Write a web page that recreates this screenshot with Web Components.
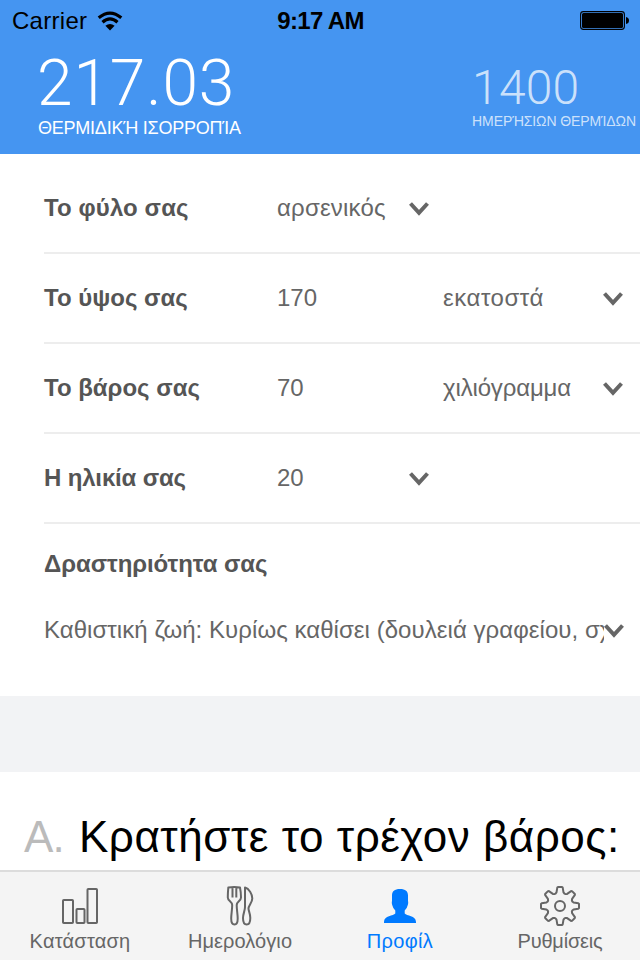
<!DOCTYPE html>
<html lang="el">
<head>
<meta charset="utf-8">
<title>Προφίλ</title>
<style>
html, body { margin: 0; height: 960px; overflow: hidden; background: #fff; }
body { font-family: "Liberation Sans", Arial, sans-serif; }
</style>
</head>
<body>
<profile-screen></profile-screen>
<script>
function define(name, html) {
  const template = document.createElement('template');
  template.innerHTML = html;
  customElements.define(name, class extends HTMLElement {
    constructor() {
      super();
      this.attachShadow({ mode: 'open' }).append(template.content.cloneNode(true));
    }
  });
}

define('status-bar', `
<style>
:host { display: grid; grid-template-columns: 1fr auto 1fr; align-items: center; height: 41px; padding: 0 11px 0 12px; box-sizing: border-box; font-size: 24px; line-height: 28px; color: #000; }
.left { display: flex; align-items: center; gap: 10px; letter-spacing: .28px; }
.time { font-weight: 700; letter-spacing: -.67px; }
.battery { justify-self: end; }
svg { display: block; }
</style>
<div class="left"><span>Carrier</span>
<svg width="26" height="20" viewBox="0 0 26 20"><g fill="none" stroke="#000" stroke-width="3.2"><path d="M1.7 6.8Q13-2.6 24.3 6.8"/><path d="M5.5 11.2Q13 4.600 20.5 11.2"/></g><path d="M8.4 14.8Q13 11.2 17.6 14.8L13 19.4Z"/></svg></div>
<span class="time">9:17 AM</span>
<svg class="battery" width="49" height="19" viewBox="0 0 49 19"><rect x=".6" y=".6" width="43.8" height="17.8" rx="2.8" fill="none" stroke="#000" stroke-width="1.1"/><rect x="2" y="2" width="41" height="15" rx="1.5"/><path d="M46 6q3 .5 3 3.500t-3 3.500z"/></svg>`);

define('calorie-header', `
<style>
:host { display: block; height: 154px; background: #4595f1; color: #fff; overflow: hidden; }
.stats { display: flex; justify-content: space-between; padding: 19px 4px 0 37px; }
.main, .goal { display: flex; flex-direction: column; white-space: nowrap; }
.value { font-family: Roboto, sans-serif; font-weight: 300; font-size: 64px; line-height: 48px; letter-spacing: .9px; margin-bottom: 10px; }
.caption { font-size: 18px; line-height: 20px; letter-spacing: -.23px; padding-left: 1px; }
.goal { padding-top: 4px; color: rgba(255,255,255,.74); }
.goal .value { font-size: 48px; letter-spacing: .2px; margin-bottom: 1px; }
.goal .caption { font-size: 14px; line-height: 16px; letter-spacing: -.1px; padding: 0; }
</style>
<status-bar></status-bar>
<div class="stats">
<div class="main"><span class="value">217.03</span><span class="caption">ΘΕΡΜΙΔΙΚΉ ΙΣΟΡΡΟΠΊΑ</span></div>
<div class="goal"><span class="value">1400</span><span class="caption">ΗΜΕΡΉΣΙΩΝ ΘΕΡΜΊΔΩΝ</span></div>
</div>`);

define('chevron-down', `
<style>:host { display: block; width: 20px; height: 14px; } svg { display: block; }</style>
<svg width="20" height="14" viewBox="0 0 20 14"><path d="M1.5 1.5L10 10.8L18.5 1.5" fill="none" stroke="#666" stroke-width="4"/></svg>`);

define('unit-row', `
<style>
:host { display: grid; grid-template-columns: 233px 166px 160px 1fr; align-items: center; height: 90px; box-sizing: border-box; margin-left: 44px; border-bottom: 2px solid #ededed; font-size: 24px; line-height: 28px; color: #666; white-space: nowrap; }
.label { font-weight: 700; color: #555; }
chevron-down { margin-top: 2px; }
</style>
<span class="label"><slot name="label"></slot></span>
<span><slot></slot></span>
<span><slot name="unit"></slot></span>
<chevron-down></chevron-down>`);

define('select-row', `
<style>
:host { display: grid; grid-template-columns: 233px 132px 1fr; align-items: center; height: 90px; box-sizing: border-box; margin-left: 44px; border-bottom: 2px solid #ededed; font-size: 24px; line-height: 28px; color: #666; white-space: nowrap; }
.label { font-weight: 700; color: #555; }
chevron-down { margin-top: 2px; }
</style>
<span class="label"><slot name="label"></slot></span>
<span><slot></slot></span>
<chevron-down></chevron-down>`);

define('activity-field', `
<style>
:host { display: block; height: 172px; box-sizing: border-box; padding: 26px 0 0 44px; font-size: 24px; line-height: 28px; color: #666; }
.title { font-weight: 700; color: #555; letter-spacing: -.07px; }
.choice { display: flex; align-items: center; margin-top: 38px; }
.text { width: 560px; flex: none; overflow: hidden; white-space: nowrap; letter-spacing: .05px; }
chevron-down { margin-top: 2px; }
</style>
<div class="title"><slot name="label"></slot></div>
<div class="choice"><span class="text"><slot></slot></span><chevron-down></chevron-down></div>`);

define('plan-heading', `
<style>
:host { display: flex; height: 98px; box-sizing: border-box; padding: 40px 0 0 24px; font-size: 44px; line-height: 50px; white-space: nowrap; color: #000; overflow: hidden; }
.mark { width: 55px; color: #bbb; letter-spacing: -.8px; }
.text { letter-spacing: .52px; }
</style>
<span class="mark"><slot name="mark"></slot></span><span class="text"><slot></slot></span>`);

define('tab-item', `
<style>
:host { display: flex; flex-direction: column; align-items: center; color: #666; font-size: 20px; line-height: 24px; white-space: nowrap; padding-top: 13px; }
:host([active]) { color: #007aff; }
::slotted(svg) { display: block; }
</style>
<slot name="icon"></slot><span><slot></slot></span>`);

define('tab-bar', `
<style>
:host { display: grid; grid-template-columns: repeat(4, 1fr); height: 90px; box-sizing: border-box; border-top: 2px solid #dcdcdc; background: #f4f4f4; }
</style>
<slot></slot>`);

define('profile-screen', `
<style>
:host { display: flex; flex-direction: column; width: 640px; height: 960px; overflow: hidden; background: #fff; }
:host > * { flex: none; }
.form { padding-top: 10px; }
.band { height: 76px; background: #f2f3f5; }
</style>
<calorie-header></calorie-header>
<div class="form">
<select-row><span slot="label" style="letter-spacing:.11px">Το φύλο σας</span><span style="letter-spacing:.2px">αρσενικός</span></select-row>
<unit-row><span slot="label">Το ύψος σας</span><span>170</span><span slot="unit" style="letter-spacing:.54px">εκατοστά</span></unit-row>
<unit-row><span slot="label">Το βάρος σας</span><span>70</span><span slot="unit" style="letter-spacing:-.15px">χιλιόγραμμα</span></unit-row>
<select-row><span slot="label" style="letter-spacing:-.16px">Η ηλικία σας</span><span>20</span></select-row>
<activity-field><span slot="label">Δραστηριότητα σας</span>Καθιστική ζωή: Κυρίως καθίσει (δουλειά γραφείου, σχ</activity-field>
</div>
<div class="band"></div>
<plan-heading><span slot="mark">A.</span>Κρατήστε το τρέχον βάρος:</plan-heading>
<tab-bar>
<tab-item><svg slot="icon" width="44" height="44" viewBox="0 0 44 44" fill="none" stroke="#666" stroke-width="2"><rect x="5" y="15" width="10" height="23" rx=".8"/><rect x="18.5" y="24" width="8" height="14" rx=".8"/><rect x="29.5" y="4" width="9.500" height="34" rx=".8"/></svg><span style="letter-spacing:.22px">Κατάσταση</span></tab-item>
<tab-item><svg slot="icon" width="44" height="44" viewBox="0 0 44 44" fill="none" stroke="#666" stroke-width="2" stroke-linejoin="round"><path d="M10.300 2.500Q16.300 1.500 22 2.500C22.700 6 23 9 23 12.500C23 16 18.700 16.500 18.700 20C18.700 25 19.700 29 19.700 33.500C19.700 37 18.500 39.500 16.500 39.500S13.200 37 13.200 33.500C13.200 29 14.200 25 14.200 20C14.200 16.500 9.800 16 9.800 12.500C9.800 9 10 6 10.300 2.500ZM14.500 3V12.500M18.300 3V12.500"/><path d="M27 2.500C31 3.500 34.300 9 34.300 13.500C34.300 17.500 30.500 20.500 30.500 23.500C30.500 26 32.300 28.500 32.300 33C32.300 37 31 39.500 28.700 39.500S25 37 25 33C25 29 27 25.500 27 22Z"/></svg><span style="letter-spacing:.08px">Ημερολόγιο</span></tab-item>
<tab-item active><svg slot="icon" width="44" height="44" viewBox="0 0 44 44" fill="#007aff"><path d="M22 4C27.500 4 30 6.300 30 10.500V15.500Q30.500 17.500 29.800 20Q29 23.500 26.700 25.500V28.500C28.500 30.800 38 30.500 38 37V38H6V37C6 30.500 15.500 30.800 17.300 28.500V25.500Q15 23.500 14.200 20Q13.500 17.500 14 15.500V10.500C14 6.300 16.500 4 22 4Z"/></svg><span style="letter-spacing:.33px">Προφίλ</span></tab-item>
<tab-item><svg slot="icon" width="44" height="44" viewBox="-22 -21 44 44" fill="none" stroke="#666" stroke-width="2" stroke-linejoin="round"><circle r="5"/><path id="gear"/></svg><span style="letter-spacing:-.2px">Ρυθμίσεις</span></tab-item>
</tab-bar>`);

// Eight-toothed outline, centred on the origin of the icon's view box.
const gear = document.querySelector('profile-screen').shadowRoot.getElementById('gear');
const profile = [[-4.5, -12.3], [-3.5, -13.6], [-2.7, -18.4], [-2, -19], [2, -19], [2.7, -18.4], [3.5, -13.6], [4.5, -12.3]];
const points = [];
for (let tooth = 0; tooth < 8; tooth++) {
  const angle = tooth * Math.PI / 4;
  for (const [x, y] of profile) {
    points.push((x * Math.cos(angle) - y * Math.sin(angle)).toFixed(2) + ' ' + (x * Math.sin(angle) + y * Math.cos(angle)).toFixed(2));
  }
}
gear.setAttribute('d', 'M' + points.join('L') + 'Z');
</script>
</body>
</html>
